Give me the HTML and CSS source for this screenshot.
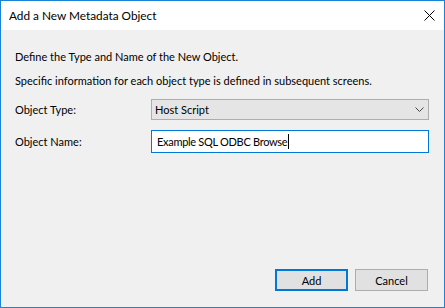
FILE: index.html
```html
<!DOCTYPE html>
<html>
<head>
<meta charset="utf-8">
<link rel="stylesheet" href="styles.css">
</head>
<body>
<div class="window">
  <div class="titlebar">
    <span class="title">Add a New Metadata Object</span>
    <svg class="close" width="11" height="11" viewBox="0 0 11 11"><path d="M0.5 0.5L10.5 10.5M10.5 0.5L0.5 10.5" stroke="#000" stroke-width="1" fill="none"/></svg>
  </div>
  <div class="content">
    <p class="line first">Define the Type and Name of the New Object.</p>
    <p class="line">Specific information for each object type is defined in subsequent screens.</p>
    <div class="form">
      <div class="row">
        <span class="label">Object Type:</span>
        <div class="select">
          <span>Host Script</span>
          <svg class="chev" width="9" height="5" viewBox="0 0 9 5"><path d="M0.5 0.5L4.5 4.5L8.5 0.5" stroke="#444" stroke-width="1" fill="none"/></svg>
        </div>
      </div>
      <div class="row second">
        <span class="label">Object Name:</span>
        <div class="input"><span>Example SQL ODBC Browse</span><span class="caret"></span></div>
      </div>
    </div>
    <div class="buttons">
      <button class="btn primary">Add</button>
      <button class="btn">Cancel</button>
    </div>
  </div>
</div>
</body>
</html>
```
FILE: styles.css
```css
html, body {
  margin: 0;
  padding: 0;
}
body {
  font-family: Lato, "Noto Sans", sans-serif;
  font-size: 11px;
  color: #000;
}
.window {
  width: 445px;
  height: 308px;
  box-sizing: border-box;
  border: 1px solid #1883d7;
  background: #f0f0f0;
  display: flex;
  flex-direction: column;
}
.titlebar {
  height: 29px;
  background: #fff;
  display: flex;
  align-items: center;
  justify-content: space-between;
  padding-left: 8px;
  padding-right: 9px;
}
.title {
  font-size: 11.8px;
  line-height: 16px;
}
.close {
  display: block;
}
.content {
  flex: 1;
  display: flex;
  flex-direction: column;
  padding: 19px 15px 16px 14px;
}
.line {
  margin: 0;
  line-height: 16px;
  white-space: nowrap;
}
.line + .line {
  margin-top: 8px;
}
.form {
  margin-top: 10px;
  display: flex;
  flex-direction: column;
}
.row {
  display: flex;
  align-items: center;
}
.row.second {
  margin-top: 10px;
}
.label {
  width: 136px;
  flex: none;
}
.select {
  flex: 1;
  height: 21px;
  box-sizing: border-box;
  border: 1px solid #adadad;
  background: #e5e5e5;
  display: flex;
  align-items: center;
  justify-content: space-between;
  padding: 0 4px 0 3px;
}
.chev {
  display: block;
}
.input {
  flex: 1;
  height: 23px;
  box-sizing: border-box;
  border: 1px solid #0078d7;
  background: #fff;
  display: flex;
  align-items: center;
  padding-left: 5px;
}
.input span:first-child {
  letter-spacing: -0.3px;
}
.caret {
  width: 1px;
  height: 15px;
  background: #000;
  margin-left: 1px;
}
.buttons {
  margin-top: auto;
  display: flex;
  justify-content: flex-end;
  gap: 7px;
  padding-right: 1px;
}
.btn {
  width: 73px;
  height: 22px;
  box-sizing: border-box;
  border: 1px solid #adadad;
  background: #e1e1e1;
  font-family: Lato, "Noto Sans", sans-serif;
  font-size: 11px;
  color: #000;
  padding: 0;
  margin: 0;
}
.btn.primary {
  border: 2px solid #0078d7;
}
```
